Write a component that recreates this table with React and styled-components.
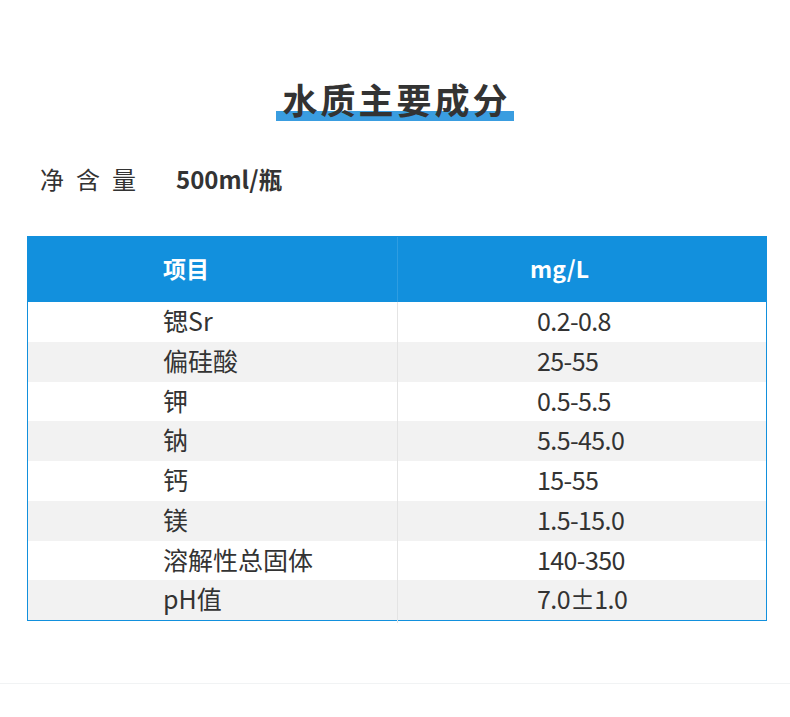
import React from "react"
import styled, { createGlobalStyle } from "styled-components"

const GlobalStyle = createGlobalStyle`
  body {
    margin: 0;
    background: #fff;
    font-family: "Noto Sans CJK SC", "Noto Sans", sans-serif;
    color: #333;
  }
`

const Page = styled("main")`
  width: 790px;
  height: 717px;
  display: flex;
  flex-direction: column;
`

const TitleRow = styled("div")`
  display: flex;
  justify-content: center;
  padding-top: 76px;
`

const Title = styled("h1")`
  margin: 0;
  padding: 0 3px 0 6px;
  font-size: 35px;
  line-height: 45px;
  font-weight: 700;
  letter-spacing: 3px;
  color: #333;
  background: linear-gradient(#3a9de0, #3a9de0) left bottom / 100% 10px no-repeat;
`

const NetRow = styled("div")`
  display: flex;
  align-items: center;
  padding: 43px 0 0 40px;
  font-size: 24px;
  line-height: 30px;
`

const NetLabel = styled("span")`
  width: 136px;
  letter-spacing: 12px;
`

const NetValue = styled("strong")`
  font-weight: 700;
`

const Table = styled("div")`
  margin: 42px 0 0 27px;
  width: 740px;
  border: 1px solid #1290dd;
  box-sizing: border-box;
`

const Row = styled("div")`
  display: grid;
  grid-template-columns: 369px 1fr;
  height: ${p => (p.head ? "65px" : "39.75px")};
  background: ${p => (p.head ? "#1290dd" : p.odd ? "#f2f2f2" : "#fff")};
  color: ${p => (p.head ? "#fff" : "#333")};
  font-size: ${p => (p.head ? "23px" : "25px")};
  font-weight: ${p => (p.head ? 700 : 400)};
`

const Cell = styled("div")`
  display: flex;
  align-items: center;
  padding-left: ${p => p.pad}px;
  padding-bottom: ${p => (p.head ? 4 : 7)}px;
  border-left: ${p =>
    !p.right ? "none" : p.head ? "1px solid rgba(255,255,255,0.12)" : "1px solid #e4e4e4"};
  letter-spacing: ${p => (p.num ? "-0.6px" : "0")};
`

const Footer = styled("div")`
  margin-top: auto;
  margin-bottom: 33px;
  border-top: 1px solid #f1f3f4;
`

const rows = [
  ["锶Sr", "0.2-0.8"],
  ["偏硅酸", "25-55"],
  ["钾", "0.5-5.5"],
  ["钠", "5.5-45.0"],
  ["钙", "15-55"],
  ["镁", "1.5-15.0"],
  ["溶解性总固体", "140-350"],
  ["pH值", "7.0±1.0"],
]

export default function App() {
  return (
    <Page>
      <GlobalStyle />
      <TitleRow>
        <Title>水质主要成分</Title>
      </TitleRow>
      <NetRow>
        <NetLabel>净含量</NetLabel>
        <NetValue>500ml/瓶</NetValue>
      </NetRow>
      <Table>
        <Row head>
          <Cell head pad={135}>项目</Cell>
          <Cell head right pad={132}>mg/L</Cell>
        </Row>
        {rows.map(([name, value], i) => (
          <Row key={name} odd={i % 2 === 1}>
            <Cell pad={135}>{name}</Cell>
            <Cell right num pad={139}>{value}</Cell>
          </Row>
        ))}
      </Table>
      <Footer />
    </Page>
  )
}
